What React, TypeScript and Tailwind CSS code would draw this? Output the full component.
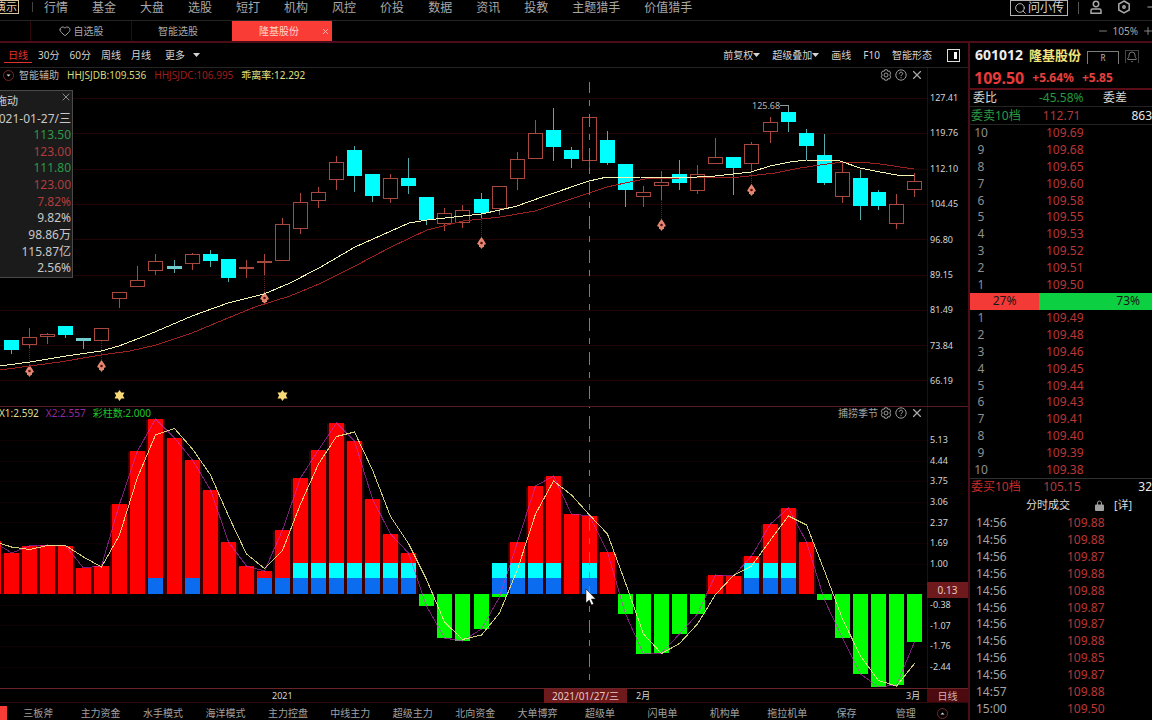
import React from "react";
import { Bell, Bolt, Heart, Minus, Plus, Search, X } from "lucide-react";

type Candle = [kind: "up" | "down", high: number, top: number, bottom: number, low: number];

const PITCH = 18.06;
const cx = (i: number) => Math.round(11 + i * PITCH) + 0.5;

const candles: Candle[] = [
  ["down", 340, 340, 350, 354],
  ["up", 328, 337, 345, 348],
  ["up", 333, 334, 337, 344],
  ["down", 326, 326, 335, 338],
  ["down", 338, 338, 341, 349],
  ["up", 328, 328, 341, 341],
  ["up", 292, 292, 299, 308],
  ["up", 266, 280, 287, 287],
  ["up", 254, 261, 271, 275],
  ["down", 260, 266, 269, 273],
  ["up", 253, 254, 264, 270],
  ["down", 250, 254, 261, 267],
  ["down", 259, 259, 278, 282],
  ["up", 260, 267, 269, 278],
  ["up", 254, 261, 263, 275],
  ["up", 218, 224, 261, 261],
  ["up", 193, 202, 229, 234],
  ["up", 187, 192, 201, 208],
  ["up", 156, 162, 180, 190],
  ["down", 146, 150, 176, 192],
  ["down", 174, 174, 196, 202],
  ["up", 174, 178, 199, 203],
  ["down", 158, 178, 186, 194],
  ["down", 197, 197, 220, 225],
  ["up", 208, 213, 224, 231],
  ["up", 205, 210, 223, 228],
  ["down", 193, 199, 213, 218],
  ["up", 186, 186, 209, 215],
  ["up", 152, 159, 179, 190],
  ["up", 120, 133, 159, 159],
  ["down", 108, 130, 147, 161],
  ["down", 147, 150, 159, 168],
  ["up", 117, 117, 161, 171],
  ["down", 131, 140, 163, 165],
  ["down", 164, 164, 190, 207],
  ["up", 186, 192, 197, 207],
  ["up", 171, 182, 186, 200],
  ["down", 160, 174, 183, 190],
  ["up", 165, 174, 191, 194],
  ["up", 138, 157, 164, 164],
  ["down", 157, 157, 168, 195],
  ["up", 142, 144, 164, 170],
  ["up", 117, 122, 132, 143],
  ["down", 105, 112, 122, 132],
  ["down", 129, 133, 146, 160],
  ["down", 134, 155, 183, 185],
  ["up", 163, 172, 197, 203],
  ["down", 170, 178, 206, 220],
  ["down", 190, 192, 206, 210],
  ["up", 194, 204, 224, 229],
  ["up", 173, 181, 190, 197],
];

const fastLine =
  "0,366 30,362 66,356 101,351 119,346 150,334 192,316 228,303 264,294 290,283 319,268 355,247 391,231 409,223 427,220 463,216 481,214 500,210 517,206 545,196 589,181 607,177 640,177 679,178 715,176 751,172 770,166 790,162 806,160 840,161 860,168 880,172 897,175 914,176";
const slowLine =
  "0,370 60,362 101,355 130,351 156,345 192,333 228,318 255,307 290,296 319,284 355,266 391,247 427,230 463,221 500,217 535,211 571,199 607,187 625,183 645,179 680,178 740,177 775,173 800,168 820,165 842,162 860,162 880,164 914,169";

const markers = [
  [1, 371],
  [5, 366],
  [14, 298],
  [26, 243],
  [36, 225],
  [41, 190],
];

const ZERO = 594;
const bars = [
  553, 546, 545, 546, 568, 566, 504, 451, 419, 438, 460, 490, 542, 566, 571, 530, 478, 450, 423, 441, 499, 534, 553,
  606, 638, 641, 629, 597, 542, 486, 476, 514, 516, 552, 614, 654, 653, 634, 614, 575, 576, 556, 524, 508, 542, 600,
  638, 674, 687, 685, 642,
];
const blueOnly = [8, 10, 14, 15];
const cyanBlue = [16, 17, 18, 19, 20, 21, 22, 27, 28, 29, 30, 32, 41, 42, 43];

const signal = ["-7,541", ...bars.map((y, i) => `${cx(i)},${y}`)].join(" ");
const average = ["-7,541", ...bars.map((y, i) => `${cx(i)},${(y + (i ? bars[i - 1] : 541)) / 2}`)].join(" ");

const nav = ["行情", "基金", "大盘", "选股", "短打", "机构", "风控", "价投", "数据", "资讯", "投教", "主题猎手", "价值猎手"];
const strategies = [
  "三板斧", "主力资金", "水手模式", "海洋模式", "主力控盘", "中线主力", "超级主力", "北向资金", "大单博弈", "超级单",
  "闪电单", "机构单", "拖拉机单", "保存", "管理",
];
const priceScale = ["127.41", "119.76", "112.10", "104.45", "96.80", "89.15", "81.49", "73.84", "66.19"];
const oscScale = ["5.13", "4.44", "3.75", "3.06", "2.37", "1.69", "1.00", "", "-0.38", "-1.07", "-1.76", "-2.44"];
const asks = ["109.69", "109.68", "109.65", "109.60", "109.58", "109.55", "109.53", "109.52", "109.51", "109.50"];
const bids = ["109.49", "109.48", "109.46", "109.45", "109.44", "109.43", "109.41", "109.40", "109.39", "109.38"];
const trades = [
  ["14:56", "109.88"], ["14:56", "109.88"], ["14:56", "109.87"], ["14:56", "109.88"], ["14:56", "109.88"],
  ["14:56", "109.87"], ["14:56", "109.87"], ["14:56", "109.88"], ["14:56", "109.85"], ["14:56", "109.87"],
  ["14:57", "109.88"], ["15:00", "109.50"],
];
const dayInfo = [
  ["113.50", "text-[#2b9a45]"],
  ["123.00", "text-[#b23c3c]"],
  ["111.80", "text-[#2b9a45]"],
  ["123.00", "text-[#b23c3c]"],
  ["7.82%", "text-[#b23c3c]"],
  ["9.82%", "text-[#c8c8c8]"],
  ["98.86万", "text-[#c8c8c8]"],
  ["115.87亿", "text-[#c8c8c8]"],
  ["2.56%", "text-[#c8c8c8]"],
];

function Caret() {
  return (
    <svg className="h-1 w-[7px]" viewBox="0 0 7 4" aria-hidden="true">
      <path d="M0 0h7L3.5 4z" fill="currentColor" />
    </svg>
  );
}

function CircleCaret({ up = false }: { up?: boolean }) {
  return (
    <svg className="size-[11px] shrink-0" viewBox="0 0 11 11" aria-hidden="true">
      <circle cx="5.5" cy="5.5" r="5" fill="none" stroke="#7a2524" />
      <path d={up ? "M3.5 6.5h4l-2-2z" : "M3.5 4.5h4l-2 2z"} fill="#ddd" />
    </svg>
  );
}

function PanelTools() {
  return (
    <div className="flex items-center gap-[3px] text-[#a8a8a8]">
      <button type="button" aria-label="设置">
        <svg className="size-3" viewBox="0 0 12 12" fill="none" stroke="currentColor" aria-hidden="true">
          <path d="M4.700 .8h2.600l.5 1.500 1.600-.3 1.300 2.200L9.800 6l.9 1.800L9.400 10l-1.600-.3-.5 1.500H4.700l-.5-1.500-1.600.3-1.300-2.200L2.200 6 1.300 4.200 2.600 2l1.600.3z" strokeWidth=".9" />
          <circle cx="6" cy="6" r="2" strokeWidth=".9" />
        </svg>
      </button>
      <button type="button" aria-label="帮助">
        <svg className="size-3" viewBox="0 0 12 12" fill="none" stroke="currentColor" aria-hidden="true">
          <circle cx="6" cy="6" r="5.200" strokeWidth=".9" />
          <path d="M4.300 4.800c0-2.200 3.400-2.200 3.400-.2C7.700 5.900 6 5.800 6 7.200M6 8.200v1" />
        </svg>
      </button>
      <button type="button" aria-label="关闭">
        <X className="size-3.5" strokeWidth={2} />
      </button>
    </div>
  );
}

function Crosshair({ from, to, offset }: { from: number; to: number; offset: number }) {
  return (
    <line x1="589.5" x2="589.5" y1={from} y2={to} stroke="#7c7c7c" strokeDasharray="13 7 6 8" strokeDashoffset={offset} />
  );
}

function CandleChart() {
  return (
    <svg className="block w-full" viewBox="0 82 927 324" role="img" aria-label="K线图">
      {priceScale.map((p, i) => (
        <line key={p} x1="0" x2="927" y1={Math.round(98 + i * 35.3) + 0.5} y2={Math.round(98 + i * 35.3) + 0.5} stroke="#200406" />
      ))}
      {markers.map(([i, y]) => (
        <g key={i}>
          <line x1={cx(i)} x2={cx(i)} y1={candles[i][4]} y2={y - 5} stroke="#5c2522" strokeDasharray="1 1" />
          <path d={`M${cx(i)} ${y - 6}l2.500 3.500 2 3.500-2 1v2h-1l-1.500 2-1.500-2h-1v-2l-2-1 2-3.500z`} fill="#e28670" />
          <circle cx={cx(i)} cy={y} r="1.300" fill="#5a1010" />
        </g>
      ))}
      <g shapeRendering="crispEdges">
        {candles.map(([kind, high, top, bottom, low], i) =>
          kind === "down" ? (
            <g key={i}>
              <line x1={cx(i)} x2={cx(i)} y1={high} y2={low} stroke="#55aaaa" />
              <rect x={cx(i) - 7.5} y={top} width="15" height={bottom - top} fill={bottom - top < 4 ? "#6fcfcf" : "#00ffff"} />
            </g>
          ) : (
            <g key={i} stroke="#a8483f" fill="none">
              <line x1={cx(i)} x2={cx(i)} y1={high} y2={top} />
              <line x1={cx(i)} x2={cx(i)} y1={bottom} y2={low} />
              <rect x={cx(i) - 7} y={top + 0.5} width="14" height={bottom - top - 1} />
            </g>
          ),
        )}
        <polyline points={slowLine} fill="none" stroke="#9c2222" />
        <polyline points={fastLine} fill="none" stroke="#f4f4b4" />
      </g>
      <text x="752" y="109" fontSize="9" fill="#b4b4b4">125.68</text>
      <path d="M780 105.500h8.500v7" fill="none" stroke="#8c9c9c" />
      {[6, 15].map((i) => (
        <path
          key={i}
          d={`M${cx(i)} 390l1.700 2.600h3.300l-1.600 2.900 1.600 2.900h-3.300l-1.700 2.600-1.700-2.600h-3.300l1.600-2.900-1.600-2.900h3.300z`}
          fill="#f6d878"
        />
      ))}
      <Crosshair from={82} to={406} offset={2} />
    </svg>
  );
}

function OscillatorChart() {
  return (
    <svg className="block w-full overflow-visible" viewBox="0 419 927 269" role="img" aria-label="捕捞季节">
      {oscScale.map((_, i) => (
        <line key={i} x1="0" x2="927" y1={Math.round(440 + i * 20.6) + 0.5} y2={Math.round(440 + i * 20.6) + 0.5} stroke="#100203" />
      ))}
      <rect x="0" y="541" width="1" height="53" fill="#f00" />
      {bars.map((y, i) => {
        const x = cx(i) - 7.5;
        const positive = y < ZERO;
        return (
          <g key={i} shapeRendering="crispEdges">
            {positive && <rect x={x - 2} y={y + 1} width="19" height={ZERO - y - 1} fill="#3c0000" />}
            <rect x={x} y={Math.min(y, ZERO)} width="15" height={Math.abs(ZERO - y)} fill={positive ? "#ff0000" : "#00ff00"} />
            {cyanBlue.includes(i) && <rect x={x} y="563" width="15" height="16" fill="#00ffff" />}
            {(cyanBlue.includes(i) || blueOnly.includes(i)) && <rect x={x} y="578" width="15" height="16" fill="#0b6cf0" />}
          </g>
        );
      })}
      <g fill="none" shapeRendering="crispEdges">
        <polyline points={signal} stroke="#c832c8" strokeOpacity=".6" />
        <polyline points={average} stroke="#f2ee90" strokeOpacity=".85" />
      </g>
      <Crosshair from={407} to={688} offset={-9} />
      <path d="M586 589v14l3.200-3 2.300 5 2.200-1-2.300-5h4.300z" fill="#fff" stroke="#000" strokeWidth=".5" />
    </svg>
  );
}

function DayPopup() {
  return (
    <aside className="absolute left-0 top-[22px] w-[73px] overflow-hidden border border-l-0 border-[#4a4a4a] bg-[#1b1b1b] text-xs">
      <div className="flex h-5 items-start justify-between">
        <span className="-ml-1 mt-1 text-[11px] leading-3 text-[#d0d0d0]">拖动</span>
        <button type="button" aria-label="关闭" className="text-[#8c8c8c]">
          <X className="size-3" />
        </button>
      </div>
      <div className="flex h-4 items-center justify-end whitespace-nowrap pr-px text-[#c8c8c8]">2021-01-27/三</div>
      <ul className="grid h-[150px] auto-rows-fr pr-px text-right">
        {dayInfo.map(([value, tone], i) => (
          <li key={i} className={`${tone} leading-4`}>
            {value}
          </li>
        ))}
      </ul>
    </aside>
  );
}

function DepthTable({ label, levels }: { label: string; levels: [number, string][] }) {
  return (
    <table aria-label={label} className="h-[168px] w-full table-fixed">
      <tbody>
        {levels.map(([level, price]) => (
          <tr key={level}>
            <td className="w-[62px] pl-[3px]">
              <span className="inline-block min-w-4 text-center text-[#8f8f8f]">{level}</span>
            </td>
            <td className="pl-[14px] text-[#bc3636]">{price}</td>
          </tr>
        ))}
      </tbody>
    </table>
  );
}

function Quote() {
  return (
    <aside className="flex w-[184px] shrink-0 flex-col overflow-hidden whitespace-nowrap border-l-2 border-[#4c0d18] text-xs leading-4">
      <header className="flex h-6 items-center gap-1.5 pl-[5px]">
        <h1 className="flex items-center gap-1.5 text-sm font-bold text-[#ececec]">
          601012 <span className="text-[13px] text-[#f2e47a]">隆基股份</span>
        </h1>
        <button type="button" className="mt-1 h-[13px] w-8 border border-b-0 border-[#7c7c7c] text-[8px] leading-3 text-[#bbb]">R</button>
        <button type="button" aria-label="提醒" className="mt-0.5 border border-b-0 border-[#444] text-[#777]">
          <Bell className="size-3" strokeWidth={2} />
        </button>
      </header>
      <div className="flex h-[23px] items-center gap-2 border-b-2 border-[#5a0d16] pl-1 font-bold text-[#e5403e]">
        <span className="text-base leading-4 text-[#e83a3a]">109.50</span>
        <span>+5.64%</span>
        <span>+5.85</span>
      </div>
      <div className="flex h-[17px] items-center border-b border-[#242424]">
        <span className="w-[69px] pl-[3px] text-[#d8d8d8]">委比</span>
        <span className="w-16 text-[#259a3c]">-45.58%</span>
        <span className="text-[#d8d8d8]">委差</span>
      </div>
      <div className="flex h-[18px] items-center border-b border-[#242424]">
        <span className="w-[74px] pl-px text-[#2c9c44]">委卖10档</span>
        <span className="w-[90px] text-[#b43a3a]">112.71</span>
        <span className="text-[#e8e8e8]">863</span>
      </div>
      <DepthTable label="委卖" levels={asks.map((p, i) => [10 - i, p])} />
      <div className="flex h-[17px] w-full text-[#181818]">
        <span className="w-[38%] bg-[#f43a36] text-center">27%</span>
        <span className="flex-1 bg-[#0ccf42] pr-3 text-right">73%</span>
      </div>
      <DepthTable label="委买" levels={bids.map((p, i) => [i + 1, p])} />
      <div className="flex h-[17px] items-center border-t border-[#303030]">
        <span className="w-[74px] pl-px text-[#cc2c2c]">委买10档</span>
        <span className="w-24 text-[#b43a3a]">105.15</span>
        <span className="text-[#e8e8e8]">32</span>
      </div>
      <div className="flex h-5 items-center pl-14 text-[11px] text-[#dcdcdc]">
        <h2 className="w-[69px]">分时成交</h2>
        <svg className="h-[11px] w-[9px]" viewBox="0 0 9 11" aria-hidden="true">
          <path d="M2.500 5V3a2 2 0 0 1 4 0v2" fill="none" stroke="#999" />
          <rect x="0" y="4.500" width="9" height="6.500" rx="1" fill="#a0a0a0" />
        </svg>
        <a href="#detail" className="ml-2.5">[详]</a>
      </div>
      <table aria-label="分时成交" className="h-[202px] w-full table-fixed">
        <tbody>
          {trades.map(([time, price], i) => (
            <tr key={i}>
              <td className="w-[97px] pl-1.5 text-[#a4a4a4]">{time}</td>
              <td className="text-[#bc3636]">{price}</td>
            </tr>
          ))}
        </tbody>
      </table>
    </aside>
  );
}

export default function App() {
  return (
    <div className="flex min-h-screen flex-col overflow-hidden bg-black font-['Noto_Sans','Noto_Sans_CJK_SC',sans-serif] text-[10px] leading-3 text-[#d4d4d4]">
      <header className="flex h-[21px] items-start whitespace-nowrap border-b border-[#242424] text-xs leading-4 text-[#a8a8a8]">
        <span className="flex h-3.5 w-[19px] justify-end overflow-hidden border border-l-0 border-[#d8c8a0] pr-px text-[11px] leading-3 text-[#e6d6ae]">演示</span>
        <span className="ml-[13px] mr-[11px] mt-0.5 h-2.5 w-px bg-[#444]" />
        <nav className="flex gap-6">
          {nav.map((n) => (
            <a key={n} href="#nav">{n}</a>
          ))}
        </nav>
        <button type="button" className="ml-auto flex h-4 items-center border border-[#b4b4b4] px-[3px] text-[#d8d8d8]">
          <Search className="mr-px size-[13px]" strokeWidth={1.5} />
          问小传
        </button>
        <span className="mx-2.5 mt-0.5 h-3 w-px bg-[#555]" />
        <div className="flex h-3.5 items-center gap-3.5">
          <button type="button" aria-label="用户">
            <svg className="h-[15px] w-3.5" viewBox="0 0 14 15" fill="none" stroke="currentColor" strokeWidth="1.500" aria-hidden="true">
              <circle cx="7" cy="4" r="2.700" />
              <path d="M2 13.200v-2.700q0-1.500 1.500-1.500h7q1.500 0 1.500 1.500v2.700z" />
            </svg>
          </button>
          <button type="button" aria-label="系统设置">
            <svg className="size-3.5" viewBox="0 0 14 14" fill="none" stroke="currentColor" strokeWidth="1.500" aria-hidden="true">
              <path d="M7 1l5.200 3v6L7 13l-5.200-3V4z" />
              <circle cx="7" cy="7" r="1.200" />
            </svg>
          </button>
          <button type="button" aria-label="最小化" className="-mr-[7px]">
            <Minus className="size-3.5" />
          </button>
        </div>
      </header>

      <div className="flex h-[22px] items-stretch border-b-2 border-[#4c0d18] text-[#a8a8a8]">
        <div role="tablist" className="flex pl-[30px]">
          <button type="button" role="tab" className="flex w-[101px] items-center justify-center gap-[3px] border-l border-[#30090d]">
            <Heart className="size-3" strokeWidth={2} />
            自选股
          </button>
          <button type="button" role="tab" className="w-[101px] border-l border-[#30090d] pr-2">智能选股</button>
          <button type="button" role="tab" aria-selected="true" className="flex w-[100px] items-center justify-end bg-[#fa3c36] text-[#ffd6d0]">
            隆基股份
            <X className="ml-[22px] mr-0.5 size-[9px]" />
          </button>
        </div>
        <div className="-mr-0.5 ml-auto flex items-center gap-1">
          <button type="button" aria-label="缩小"><Minus className="size-3" strokeWidth={1.5} /></button>
          <span>105%</span>
          <button type="button" aria-label="放大"><Plus className="size-3" strokeWidth={1.5} /></button>
        </div>
      </div>

      <div className="flex flex-1">
        <main className="flex min-w-0 flex-1 flex-col">
          <div className="flex h-[25px] items-center justify-between whitespace-nowrap border-b border-[#242424] pl-1 pr-2">
            <div className="flex items-center gap-2.5">
              <button type="button" className="-mr-1 h-4 border-b border-[#e03030] px-1 text-[#e03030]">日线</button>
              <button type="button">30分</button>
              <button type="button">60分</button>
              <button type="button">周线</button>
              <button type="button">月线</button>
              <button type="button" className="ml-1 flex items-center gap-2">更多<Caret /></button>
            </div>
            <div className="flex items-center gap-3">
              <button type="button" className="flex items-center">前复权<Caret /></button>
              <button type="button" className="flex items-center">超级叠加<Caret /></button>
              <button type="button">画线</button>
              <button type="button">F10</button>
              <button type="button">智能形态</button>
              <button type="button" aria-label="侧栏" className="ml-[3px] flex h-[13px] w-[13px] justify-end border border-[#ddd] p-0.5">
                <span className="h-full w-[3px] bg-white" />
              </button>
            </div>
          </div>

          <section className="relative flex border-b border-[#541a20]">
            <div className="min-w-0 flex-1">
              <div className="flex h-3.5 items-center justify-between whitespace-nowrap pl-[3px] pr-[3px]">
                <div className="flex items-center gap-2">
                  <span className="flex items-center gap-[5px] text-[#b4b4b4]"><CircleCaret />智能辅助</span>
                  <span className="text-[#d8d87c]">HHJSJDB:109.536</span>
                  <span className="text-[#a01c1c]">HHJSJDC:106.995</span>
                  <span className="text-[#e0e080]">乖离率:12.292</span>
                </div>
                <PanelTools />
              </div>
              <CandleChart />
            </div>
            <ol className="flex w-[41px] flex-col justify-between border-l border-[#30090d] pb-[17px] pl-0.5 pt-[22px] text-[9px] leading-4">
              {priceScale.map((p) => (
                <li key={p}>{p}</li>
              ))}
            </ol>
            <DayPopup />
          </section>

          <section className="relative flex border-b border-[#6a2428]">
            <div className="min-w-0 flex-1">
              <div className="flex h-3 items-center justify-between whitespace-nowrap pr-[3px]">
                <div className="flex gap-[7px]">
                  <span className="-ml-px text-[#dede9c]">X1:2.592</span>
                  <span className="text-[#962c9c]">X2:2.557</span>
                  <span className="text-[#1fc42c]">彩柱数:2.000</span>
                </div>
                <div className="flex items-center gap-0.5 text-[#a0a0a0]">
                  捕捞季节
                  <PanelTools />
                </div>
              </div>
              <OscillatorChart />
            </div>
            <ol className="flex w-[41px] flex-col justify-between border-l border-[#30090d] pb-[13px] pl-0.5 pt-[25px] text-[9px] leading-4">
              {oscScale.map((p, i) => (
                <li key={i} className="h-4">{p}</li>
              ))}
            </ol>
            <output className="absolute right-0 top-[175px] h-4 w-[41px] bg-[#6e1a1c] text-center text-[10px] leading-4 text-[#e4c8c8]">0.13</output>
          </section>

          <div className="flex h-3.5 whitespace-nowrap border-b border-[#30090d] text-[9px] leading-[14px]">
            <div className="grid min-w-0 flex-1 grid-cols-[272fr_272fr_83fr_9fr_270fr_21fr]">
              <span />
              <span>2021</span>
              <span className="bg-[#6e1a1c] text-center text-[10px] text-[#e4c8c8]">2021/01/27/三</span>
              <span />
              <span>2月</span>
              <span>3月</span>
            </div>
            <button type="button" className="w-[41px] bg-[#4c0a0e] text-[10px] text-[#d8b0b0]">日线</button>
          </div>

          <nav className="flex h-[17px] items-center whitespace-nowrap pr-5 pt-[3px] text-[#a0a0a0]">
            <span className="h-3.5 w-[7px] bg-[#fa3c36]" />
            <div className="flex min-w-0 flex-1">
              {strategies.map((s) => (
                <a key={s} href="#strategy" className={s === "保存" ? "flex-[0.9] text-center" : "flex-1 text-center"}>{s}</a>
              ))}
            </div>
            <button type="button" aria-label="展开"><CircleCaret up /></button>
          </nav>
        </main>
        <Quote />
      </div>
    </div>
  );
}
